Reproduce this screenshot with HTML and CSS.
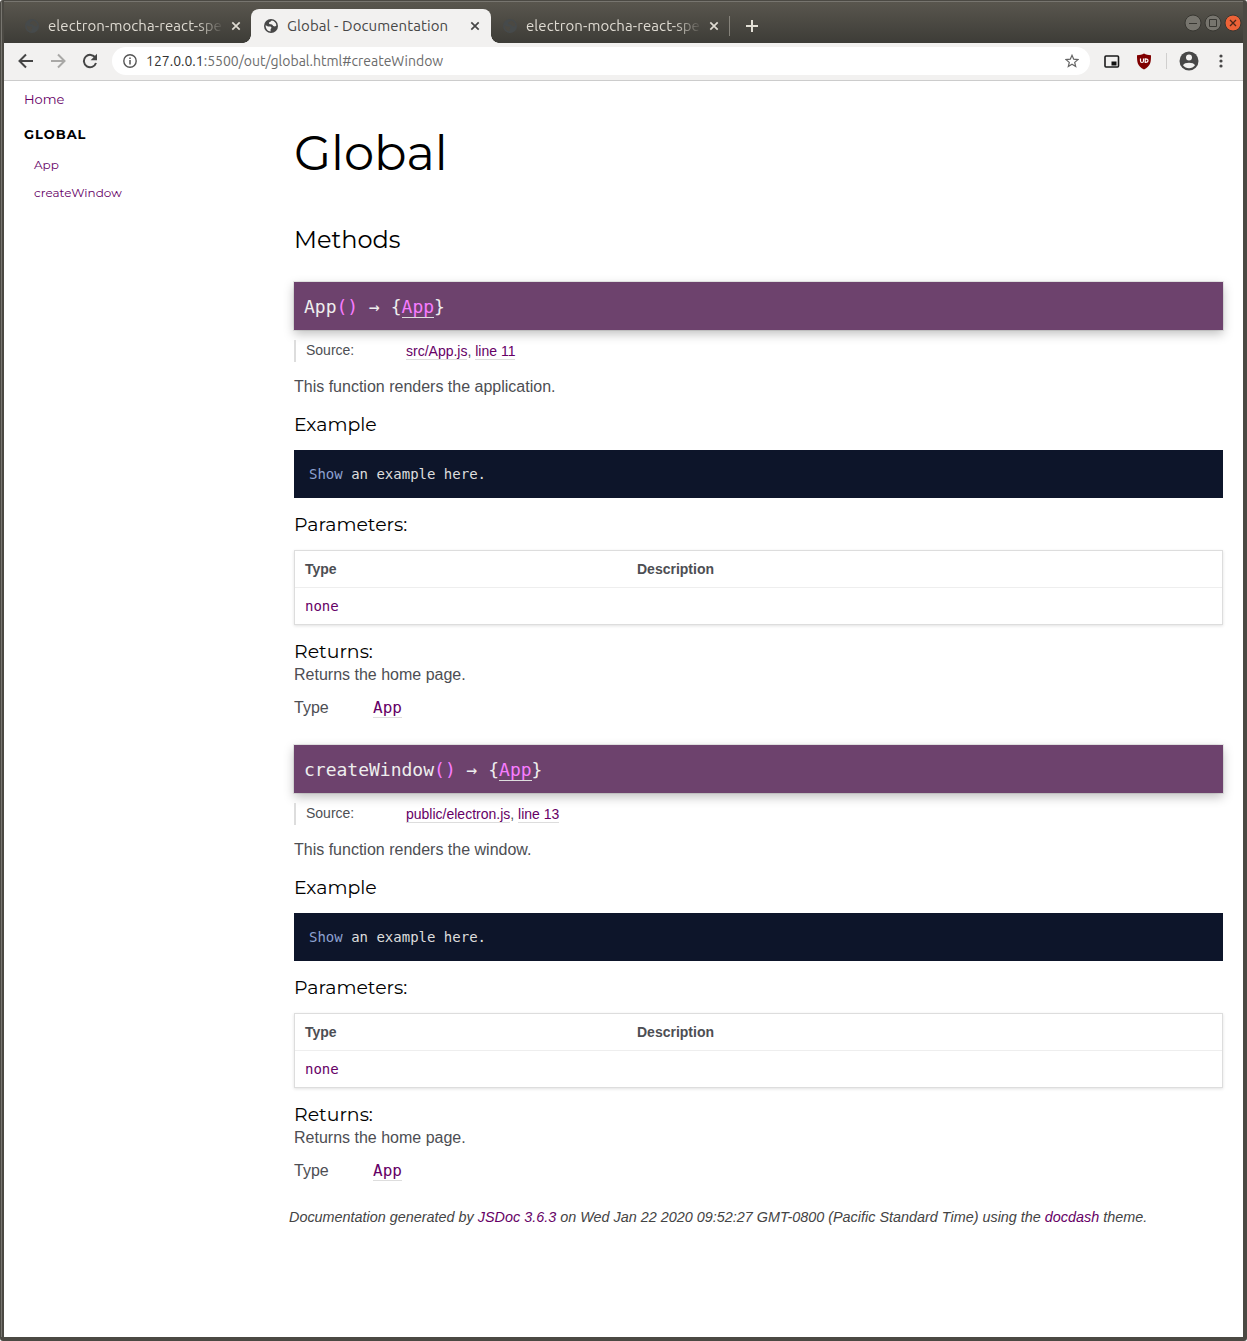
FILE: index.html
```html
<!DOCTYPE html>
<html lang="en">
<head>
<meta charset="utf-8">
<title>Global - Documentation</title>
<link rel="stylesheet" href="styles.css">
</head>
<body>
<svg width="0" height="0" class="defs">
  <symbol id="globe" viewBox="0 0 16 16"><circle cx="8" cy="8" r="7" fill="currentColor"/><path class="land" d="M2.600 7.200 5 8.400l2.600.2 1 1.200-1 1.400v2.200c-2.800-.2-5-2.500-5-6.200zM8.800 2.600 7.400 3.800 6 4.400l.2 1.700 2.800.3 1.300 1.700 1.700.4 1.400-1c-.2-2.500-2-4.600-4.600-4.900z"/></symbol>
  <symbol id="close" viewBox="0 0 10 10"><path d="m1.300 1.300 7.400 7.400m0-7.400L1.300 8.700" fill="none" stroke="currentColor" stroke-width="1.700"/></symbol>
</svg>
<div class="window">
  <header class="titlebar">
    <div class="tab first"><svg class="globe"><use href="#globe"/></svg><span class="label fade">electron-mocha-react-spe</span><svg class="close"><use href="#close"/></svg></div>
    <div class="tab active"><svg class="globe"><use href="#globe"/></svg><span class="label doc">Global - Documentation</span><svg class="close"><use href="#close"/></svg></div>
    <div class="tab last"><svg class="globe"><use href="#globe"/></svg><span class="label fade">electron-mocha-react-spe</span><svg class="close"><use href="#close"/></svg></div>
    <svg class="plus" viewBox="0 0 12 12"><path d="M6 0v12M0 6h12" stroke="#e2dfd5" stroke-width="2"/></svg>
    <div class="controls">
      <svg viewBox="0 0 18 18"><circle cx="9" cy="9" r="8" fill="#77756e" stroke="#383732"/><path d="M5 9.500h8" stroke="#383732"/></svg>
      <svg viewBox="0 0 18 18"><circle cx="9" cy="9" r="8" fill="#77756e" stroke="#383732"/><path d="M5.500 5.500h7v7h-7z" fill="none" stroke="#383732"/></svg>
      <svg viewBox="0 0 18 18"><circle cx="9" cy="9" r="8" fill="#ed6237" stroke="#383732"/><path d="m6 6 6 6m0-6-6 6" stroke="#4b2719" stroke-width="1.300"/></svg>
    </div>
  </header>
  <div class="toolbar">
    <svg class="nav" viewBox="0 0 16 16"><path d="M15 8H2M8 1.500 1.500 8 8 14.500" fill="none" stroke="#454545" stroke-width="2"/></svg>
    <svg class="nav" viewBox="0 0 16 16"><path d="M1 8h13M8 1.500 14.500 8 8 14.500" fill="none" stroke="#a9a8a6" stroke-width="2"/></svg>
    <svg class="nav" viewBox="0 0 16 16"><path d="M13.400 4.800A6.200 6.200 0 1 0 14 10" fill="none" stroke="#454545" stroke-width="2"/><path d="M15 .8v6.400H8.600z" fill="#454545"/></svg>
    <div class="address">
      <svg class="info" viewBox="0 0 14 14"><circle cx="7" cy="7" r="6.200" fill="none" stroke="#555" stroke-width="1.400"/><path d="M7 6v4.500M7 3.400v1.500" stroke="#555" stroke-width="1.500"/></svg>
      <span class="url"><b>127.0.0.1</b>:5500/out/global.html#createWindow</span>
      <svg class="star" viewBox="0 0 14 14"><path d="m7 1.300 1.700 3.900 4.200.4-3.200 2.800 1 4.100L7 10.300l-3.700 2.200 1-4.100L1.100 5.600l4.200-.4z" fill="none" stroke="#656565" stroke-width="1.200"/></svg>
    </div>
    <svg class="pip" viewBox="0 0 16 13"><rect x="1" y="1" width="13.500" height="11" rx="1" fill="none" stroke="#1a1a1a" stroke-width="1.600"/><path d="M7.500 6.500h5v4h-5z" fill="#111"/></svg>
    <svg class="shield" viewBox="0 0 16 17"><path d="M8 .5c2 1.200 4 1.700 7 1.700 0 7-.3 10.800-7 14.300C1.300 13 1 9.200 1 2.200c3 0 5-.5 7-1.700z" fill="#800000"/><path d="M4.500 5.500v2.500q0 1.500 1.500 1.500T7.500 8v-2.500M9.200 5.800v3.700q2.800 0 2.800-1.900T9.200 5.800z" fill="none" stroke="#fff" stroke-width="1.200"/></svg>
    <i class="divider"></i>
    <svg class="user" viewBox="0 0 20 20"><circle cx="10" cy="10" r="9.500" fill="#474747"/><circle cx="10" cy="6.600" r="3" fill="#f2f1f0"/><path d="M4 14.200c1.200-3.300 10.800-3.300 12 0-2.700 4-9.300 4-12 0z" fill="#f2f1f0"/></svg>
    <svg class="dots" viewBox="0 0 4 14"><g fill="#474747"><circle cx="2" cy="2" r="1.600"/><circle cx="2" cy="7" r="1.600"/><circle cx="2" cy="12" r="1.600"/></g></svg>
  </div>
  <div class="page">
    <nav class="sidebar">
      <a class="home">Home</a>
      <h3>GLOBAL</h3>
      <a class="item app">App</a>
      <a class="item create">createWindow</a>
    </nav>
    <main>
      <h1>Global</h1>
      <h2>Methods</h2>
      <section>
        <h4 class="signature">App<em>()</em> → {<a>App</a>}</h4>
        <div class="source"><span>Source:</span><div><a>src/App.js</a>, <a>line 11</a></div></div>
        <p class="desc">This function renders the application.</p>
        <h5 class="example">Example</h5>
        <pre><i>Show</i> an example here.</pre>
        <h5 class="params">Parameters:</h5>
        <div class="table"><div class="row head"><span>Type</span><span>Description</span></div><div class="row"><code>none</code></div></div>
        <h5 class="returns">Returns:</h5>
        <p class="result">Returns the home page.</p>
        <div class="type"><span>Type</span><a>App</a></div>
      </section>
      <section>
        <h4 class="signature">createWindow<em>()</em> → {<a>App</a>}</h4>
        <div class="source"><span>Source:</span><div><a>public/electron.js</a>, <a>line 13</a></div></div>
        <p class="desc">This function renders the window.</p>
        <h5 class="example">Example</h5>
        <pre><i>Show</i> an example here.</pre>
        <h5 class="params">Parameters:</h5>
        <div class="table"><div class="row head"><span>Type</span><span>Description</span></div><div class="row"><code>none</code></div></div>
        <h5 class="returns">Returns:</h5>
        <p class="result">Returns the home page.</p>
        <div class="type"><span>Type</span><a>App</a></div>
      </section>
      <footer>Documentation generated by <a>JSDoc 3.6.3</a> on Wed Jan 22 2020 09:52:27 GMT-0800 (Pacific Standard Time) using the <a>docdash</a> theme.</footer>
    </main>
  </div>
</div>
</body>
</html>
```
FILE: styles.css
```css
* { box-sizing: border-box; }
body { margin: 0; background: #fff; font-family: "Liberation Sans", Arial, sans-serif; color: #4d4e53; }
h1, h2, h3, h4, h5, p, pre { margin: 0; font-weight: 400; }
svg { display: block; flex: none; }
.defs { position: absolute; }
.window { height: 1341px; padding-left: 3px; overflow: hidden; border: 4px solid #4b4943; border-top: 1px solid #4b4943; border-left-width: 1px; border-radius: 3px; background: linear-gradient(90deg, #77756f 1px, #4b4943 1px); }

.titlebar { display: flex; height: 42px; margin-right: -3px; border-top: 1px solid #77756f; background: linear-gradient(#59564e, #3d3c37); font-family: Ubuntu, "Noto Sans", sans-serif; font-size: 15px; letter-spacing: .08px; color: #dfdbd2; }
.tab { --land: #4b4943; display: flex; align-items: center; height: 34px; margin-top: 7px; padding-left: 12px; flex: none; }
.first { width: 247px; padding-left: 20px; }
.active { --land: #f2f1f0; width: 240px; background: #f2f1f0; color: #474747; border-radius: 8px 8px 0 0; position: relative; }
.active::before, .active::after { content: ""; position: absolute; bottom: 0; width: 8px; height: 8px; }
.active::before { left: -8px; background: radial-gradient(circle at 0 0, transparent 7.500px, #f2f1f0 8px); }
.active::after { right: -8px; background: radial-gradient(circle at 100% 0, transparent 7.500px, #f2f1f0 8px); }
.last { width: 239px; padding-left: 11px; position: relative; }
.last::after { content: ""; position: absolute; right: 0; top: 7px; width: 1px; height: 20px; background: #85827a; }
.globe { width: 16px; height: 16px; margin-right: 8px; color: #464a4b; }
.land { fill: var(--land); }
.active .globe { color: #474747; }
.label { width: 174px; height: 22px; line-height: 22px; white-space: nowrap; overflow: hidden; }
.fade { -webkit-mask-image: linear-gradient(90deg, #000 148px, transparent 176px); mask-image: linear-gradient(90deg, #000 148px, transparent 176px); }
.close { width: 10px; height: 10px; margin-left: 9px; }
.plus { width: 12px; height: 12px; margin: 18px 0 0 16px; }
.controls { display: flex; gap: 2px; margin: 12px 4px 0 auto; }
.controls svg { width: 18px; height: 18px; }

.toolbar { display: flex; align-items: center; height: 38px; padding: 0 19px 1px 14px; border-bottom: 1px solid #ccc; background: #f2f1f0; }
.nav { width: 16px; height: 16px; margin-right: 16px; }
.address { display: flex; align-items: center; width: 978px; height: 28px; margin-left: -2px; padding: 0 11px; border-radius: 14px; background: #fff; font-family: Ubuntu, "Noto Sans", sans-serif; font-size: 14px; color: #6b6b6b; flex: none; }
.info { width: 14px; height: 14px; margin-right: 9px; }
.url { white-space: nowrap; }
.url b { font-weight: 400; color: #333; }
.star { width: 14px; height: 14px; margin-left: auto; }
.pip { width: 16px; height: 13px; margin-left: 14px; }
.shield { width: 16px; height: 17px; margin-left: 16px; }
.divider { width: 1px; height: 16px; margin-left: 14px; background: #d0cfce; }
.user { width: 20px; height: 20px; margin-left: 12px; }
.dots { width: 4px; height: 14px; margin-left: 20px; }

.page { display: flex; height: 1256px; background: #fff; }
.sidebar { display: flex; flex-direction: column; width: 290px; padding: 8px 0 0 20px; font-family: Montserrat, Inter, sans-serif; }
.sidebar a { color: #606; white-space: nowrap; }
.home { height: 20px; font-size: 13px; line-height: 20px; }
.sidebar h3 { margin-top: 15px; height: 20px; font-size: 13px; font-weight: 700; line-height: 20px; letter-spacing: 1px; color: #000; }
.item { padding-left: 10px; font-size: 12px; line-height: 20px; }
.app { margin-top: 11px; }
.create { margin-top: 8px; }

main { width: 929px; }
h1, h2, h5 { font-family: Montserrat, Inter, sans-serif; color: #000; white-space: nowrap; }
h1 { height: 60px; margin-top: 42px; font-size: 48px; font-weight: 400; line-height: 60px; }
h2 { height: 30px; margin: 42px 0 27px; font-size: 24px; line-height: 30px; }
section { height: 463px; }
.signature { height: 48px; padding-left: 10px; background: #6d426d; box-shadow: 0 4px 10px rgba(0,0,0,.25), 0 0 0 1px rgba(0,0,0,.08); color: #eee; font: 18px/50px "DejaVu Sans Mono", monospace; }
.signature em { font-style: normal; color: #f77cff; }
.signature a { border-bottom: 1px solid #ddd; color: #f77cff; }
.source { display: flex; height: 22px; margin-top: 10px; padding-left: 10px; border-left: 2px solid #ddd; font-size: 14px; line-height: 21px; }
.source span { width: 100px; }
.source div { padding-top: 1px; }
.source a, .type a { border-bottom: 1px solid #ddd; color: #606; }
.desc { margin-top: 12px; font-size: 16px; line-height: 25px; }
h5 { height: 24px; font-size: 18.900px; font-weight: 400; line-height: 24px; }
.example { margin-top: 14px; }
pre { height: 48px; margin-top: 13px; padding-left: 15px; background: #0d152a; color: #ddd; font: 14px/48px "DejaVu Sans Mono", monospace; }
pre i { font-style: normal; color: #8da1d1; }
.params { margin-top: 15px; }
.table { height: 75px; margin-top: 13px; border: 1px solid #ddd; box-shadow: 0 1px 3px rgba(0,0,0,.12); font-size: 14px; }
.row { display: grid; grid-template-columns: 332px 1fr; height: 37px; padding-left: 10px; line-height: 36px; }
.head { border-bottom: 1px solid #eee; font-weight: 700; }
code { font: 14px/36px "DejaVu Sans Mono", monospace; color: #606; }
.returns { margin-top: 15px; }
.result { height: 22px; font-size: 16px; line-height: 22px; }
.type { display: flex; height: 22px; margin-top: 11px; font-size: 16px; line-height: 22px; }
.type span { width: 79px; }
.type a { height: 21px; font: 16px/22px "DejaVu Sans Mono", monospace; }
footer { margin: 0 0 0 -5px; font-size: 14.400px; font-style: italic; line-height: 18px; color: #444; white-space: nowrap; }
footer a { color: #606; }
```
